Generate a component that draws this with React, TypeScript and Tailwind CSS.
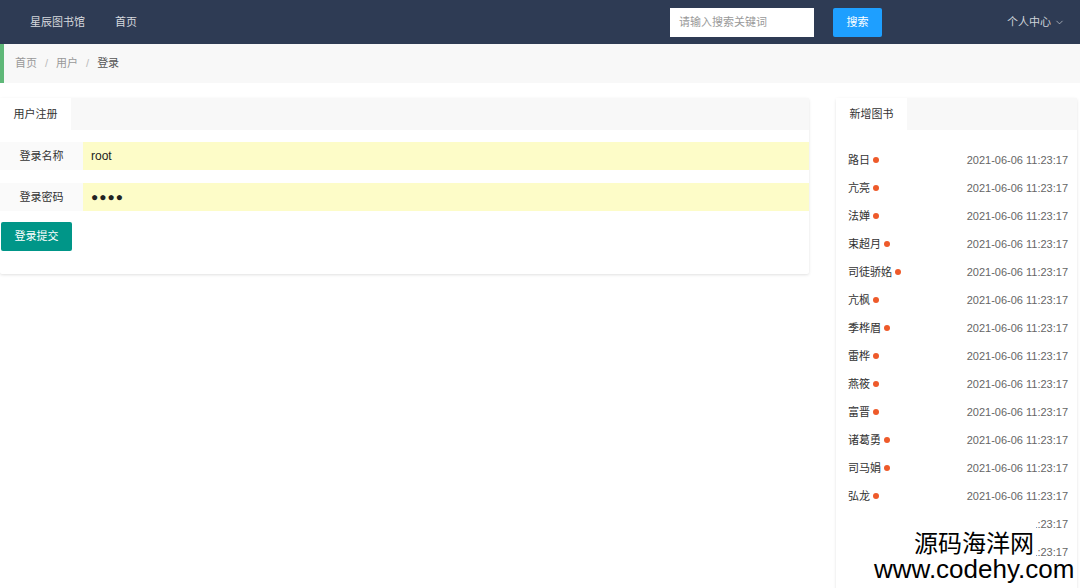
import { ChevronDown } from "lucide-react";

const BOOKS = [
  "路日",
  "亢亮",
  "法婵",
  "束超月",
  "司徒骄姳",
  "亢枫",
  "季桦眉",
  "雷桦",
  "燕筱",
  "富晋",
  "诸葛勇",
  "司马娟",
  "弘龙",
  "公孙越",
  "欧阳宁",
];

const FONT = "font-['Liberation_Sans','Noto_Sans_CJK_SC',sans-serif]";

function Header() {
  return (
    <div className="h-[44px] bg-[#2e3b54] flex items-center text-[11px] text-[#d6d9de]">
      <span className="ml-[30px]">星辰图书馆</span>
      <span className="ml-[30px]">首页</span>
      <div className="ml-auto flex items-center">
        <div className="w-[144px] h-[29px] bg-white flex items-center pl-[9px] text-[#999]">
          请输入搜索关键词
        </div>
        <button className="ml-[19px] w-[49px] h-[29px] bg-[#1e9fff] rounded-[2px] text-white">
          搜索
        </button>
        <div className="ml-[125px] mr-[15px] flex items-center gap-[3px] text-[#cfd3d9]">
          个人中心
          <ChevronDown className="w-[11px] h-[11px]" strokeWidth={1.5} />
        </div>
      </div>
    </div>
  );
}

function Breadcrumb() {
  return (
    <div className="h-[39px] bg-[#f8f8f8] border-l-4 border-[#5fb878] pl-[11px] flex items-center text-[11px] text-[#999]">
      <span>首页</span>
      <span className="mx-[8px] text-[#bbb]">/</span>
      <span>用户</span>
      <span className="mx-[8px] text-[#bbb]">/</span>
      <span className="text-[#555]">登录</span>
    </div>
  );
}

function TabHead({ title }: { title: string }) {
  return (
    <div className="h-[32px] bg-[#f8f8f8] flex">
      <div className="w-[71px] bg-white flex items-center justify-center text-[11px] text-[#333]">
        {title}
      </div>
    </div>
  );
}

function LoginCard() {
  return (
    <div className="w-[809px] h-[176px] bg-white shadow-[0_1px_3px_rgba(0,0,0,0.12)] rounded-[2px]">
      <TabHead title="用户注册" />
      <div className="pt-[12px] text-[11px] text-[#333]">
        <div className="flex h-[28px]">
          <div className="w-[83px] bg-[#fafafa] flex items-center justify-center">登录名称</div>
          <div className="flex-1 bg-[#fdfcc8] flex items-center pl-[8px] text-[12px] text-[#222]">
            root
          </div>
        </div>
        <div className="flex h-[28px] mt-[13px]">
          <div className="w-[83px] bg-[#fafafa] flex items-center justify-center">登录密码</div>
          <div className="flex-1 bg-[#fdfcc8] flex items-center pl-[8px] text-[12px] text-[#222] tracking-[1px]">
            ●●●●
          </div>
        </div>
        <button className="mt-[11px] ml-[1px] w-[71px] h-[29px] bg-[#009688] rounded-[2px] text-white text-[11px]">
          登录提交
        </button>
      </div>
    </div>
  );
}

function BookCard() {
  return (
    <div className="w-[241px] h-[500px] bg-white shadow-[0_1px_3px_rgba(0,0,0,0.12)] rounded-[2px]">
      <TabHead title="新增图书" />
      <div className="pt-[16px] pl-[12px] pr-[9px] text-[11px]">
        {BOOKS.map((name) => (
          <div key={name} className="h-[28px] flex items-center justify-between">
            <div className="flex items-center text-[#333]">
              {name}
              <span className="ml-[3px] w-[6px] h-[6px] rounded-full bg-[#ee5a2a]" />
            </div>
            <span className="text-[#666]">2021-06-06 11:23:17</span>
          </div>
        ))}
      </div>
    </div>
  );
}

export default function App() {
  return (
    <div className={`relative w-full h-[588px] overflow-hidden bg-white ${FONT}`}>
      <Header />
      <Breadcrumb />
      <div className="mt-[15px] flex gap-[27px]">
        <LoginCard />
        <BookCard />
      </div>
      <div className="absolute left-[838px] top-[509px] w-[198px] h-[79px] bg-white" />
      <div className="absolute left-[914px] top-[529px] text-[24px] leading-[30px] text-black">
        源码海洋网
      </div>
      <div className="absolute left-[874px] top-[554px] text-[26px] leading-[30px] text-black">
        www.codehy.com
      </div>
    </div>
  );
}
